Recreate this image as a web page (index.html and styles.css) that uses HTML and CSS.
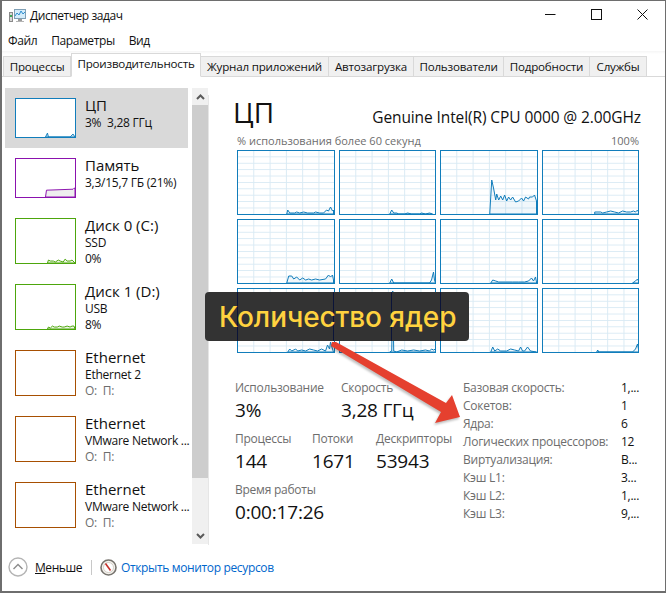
FILE: index.html
```html
<!DOCTYPE html>
<html lang="ru">
<head>
    <meta charset="UTF-8">
    <meta name="viewport" content="width=device-width, initial-scale=1.0">
    <title>Диспетчер задач</title>
    <link rel="stylesheet" href="styles.css">
</head>
<body>
    <div class="window">
        <header class="titlebar">
            <svg class="app-icon" width="17" height="14" viewBox="0 0 17 14">
                <rect x="0.5" y="3.5" width="3" height="9" fill="#d8d8d8" stroke="#8a8a8a"/>
                <rect x="1" y="6" width="2" height="2" fill="#3aa655"/>
                <rect x="5.5" y="0.5" width="11" height="9" fill="#d4ecfa" stroke="#7f9fb5"/>
                <polyline points="6,7 8,4 10,6 12,2 14,5 16,3" fill="none" stroke="#2f8fd0"/>
                <rect x="9" y="10" width="4" height="2" fill="#9a9a9a"/>
                <rect x="7" y="12" width="8" height="1" fill="#b5b5b5"/>
            </svg>
            <span class="title">Диспетчер задач</span>
            <div class="controls">
                <button class="ctl"><svg width="11" height="11" viewBox="0 0 11 11"><path d="M0 5.5H10.5" stroke="#111"/></svg></button>
                <button class="ctl"><svg width="11" height="11" viewBox="0 0 11 11"><rect x="0.5" y="0.5" width="10" height="10" fill="none" stroke="#111"/></svg></button>
                <button class="ctl"><svg width="11" height="11" viewBox="0 0 11 11"><path d="M0.5 0.5L10.5 10.5M10.5 0.5L0.5 10.5" stroke="#111"/></svg></button>
            </div>
        </header>

        <nav class="menu">
            <span>Файл</span>
            <span>Параметры</span>
            <span>Вид</span>
        </nav>

        <div class="tabs">
            <span class="tab tab-proc">Процессы</span>
            <span class="tab tab-perf active">Производительность</span>
            <span class="tab tab-log">Журнал приложений</span>
            <span class="tab tab-start">Автозагрузка</span>
            <span class="tab tab-users">Пользователи</span>
            <span class="tab tab-details">Подробности</span>
            <span class="tab tab-serv">Службы</span>
        </div>

        <div class="content">
            <aside class="sidebar">
                <div class="perf-item short selected">
                    <svg class="thumb cpu" viewBox="0 0 60 39" preserveAspectRatio="none">
                        <polygon class="line-blue" points="30,39 32,35 33,39 55,39 58,36 60,39"/>
                    </svg>
                    <div class="perf-text">
                        <div class="perf-name">ЦП</div>
                        <div class="perf-sub">3%&nbsp; 3,28 ГГц</div>
                    </div>
                </div>
                <div class="perf-item short">
                    <svg class="thumb mem" viewBox="0 0 60 39" preserveAspectRatio="none">
                        <polygon class="line-mem" points="30,39 31,32 58,31 59,30 60,30 60,39"/>
                    </svg>
                    <div class="perf-text">
                        <div class="perf-name">Память</div>
                        <div class="perf-sub">3,3/15,7 ГБ (21%)</div>
                    </div>
                </div>
                <div class="perf-item">
                    <svg class="thumb disk tall" viewBox="0 0 60 45" preserveAspectRatio="none">
                        <polygon class="line-green" points="32,45 33,42 35,43 38,43 40,44 43,42 45,43 48,44 50,41 52,43 55,43 57,42 59,44 60,45"/>
                    </svg>
                    <div class="perf-text">
                        <div class="perf-name">Диск 0 (C:)</div>
                        <div class="perf-sub">SSD</div>
                        <div class="perf-sub">0%</div>
                    </div>
                </div>
                <div class="perf-item">
                    <svg class="thumb disk tall" viewBox="0 0 60 45" preserveAspectRatio="none">
                        <polygon class="line-green" points="32,45 33,43 35,44 37,42 39,43 42,43 44,42 47,43 49,43 52,42 55,43 57,42 59,42 60,45"/>
                    </svg>
                    <div class="perf-text">
                        <div class="perf-name">Диск 1 (D:)</div>
                        <div class="perf-sub">USB</div>
                        <div class="perf-sub">8%</div>
                    </div>
                </div>
                <div class="perf-item">
                    <div class="thumb net tall"></div>
                    <div class="perf-text">
                        <div class="perf-name">Ethernet</div>
                        <div class="perf-sub">Ethernet 2</div>
                        <div class="perf-sub muted">О:&nbsp; П:</div>
                    </div>
                </div>
                <div class="perf-item">
                    <div class="thumb net tall"></div>
                    <div class="perf-text">
                        <div class="perf-name">Ethernet</div>
                        <div class="perf-sub">VMware Network ...</div>
                        <div class="perf-sub muted">О:&nbsp; П:</div>
                    </div>
                </div>
                <div class="perf-item">
                    <div class="thumb net tall"></div>
                    <div class="perf-text">
                        <div class="perf-name">Ethernet</div>
                        <div class="perf-sub">VMware Network ...</div>
                        <div class="perf-sub muted">О:&nbsp; П:</div>
                    </div>
                </div>
            </aside>

            <div class="scrollbar">
                <div class="arrow"><svg width="9" height="6" viewBox="0 0 9 6"><path d="M1 5L4.5 1.5L8 5" fill="none" stroke="#5a5a5a" stroke-width="2"/></svg></div>
                <div class="scroll-thumb"></div>
                <div class="scroll-rest"></div>
                <div class="arrow"><svg width="9" height="6" viewBox="0 0 9 6"><path d="M1 1L4.5 4.5L8 1" fill="none" stroke="#5a5a5a" stroke-width="2"/></svg></div>
            </div>

            <main class="detail">
                <div class="detail-head">
                    <h1>ЦП</h1>
                    <span class="cpu-name">Genuine Intel(R) CPU 0000 @ 2.00GHz</span>
                </div>
                <div class="axis">
                    <span>% использования более 60 секунд</span>
                    <span>100%</span>
                </div>
                <div class="charts">
                    <svg class="chart" viewBox="0 0 96 63" preserveAspectRatio="none"><polygon points="49,63 50,59 52,62 57,62 59,61 62,62 66,61 70,62 76,62 78,61 82,62 86,62 89,59 91,60 93,56 95,60 96,59 96,63"/></svg>
                    <svg class="chart" viewBox="0 0 96 63" preserveAspectRatio="none"><polygon points="50,63 52,59 54,62 57,62 59,63 65,63 68,62 72,63 80,63 82,62 86,63 90,62 93,63"/></svg>
                    <svg class="chart" viewBox="0 0 96 63" preserveAspectRatio="none"><polygon points="49,63 51,29 53,38 55,49 56,43 58,49 60,45 62,49 64,44 66,50 68,46 70,49 72,46 75,51 78,50 81,47 83,50 85,46 88,48 89,46 92,46 94,44 96,50 96,63"/></svg>
                    <svg class="chart" viewBox="0 0 96 63" preserveAspectRatio="none"><polygon points="52,63 52,61 58,61 60,62 64,61 68,60 72,61 76,62 80,60 84,61 88,61 91,60 93,61 95,59 96,61 96,63"/></svg>

                    <svg class="chart" viewBox="0 0 96 63" preserveAspectRatio="none"><polygon points="49,63 51,56 54,56 56,59 59,57 62,60 65,58 68,60 71,59 74,60 78,59 82,60 88,59 91,55 93,57 95,55 96,60 96,63"/></svg>
                    <svg class="chart" viewBox="0 0 96 63" preserveAspectRatio="none"><polygon points="50,63 52,59 54,63 90,63 92,60 94,52 95,60 96,63"/></svg>
                    <svg class="chart" viewBox="0 0 96 63" preserveAspectRatio="none"><polygon points="50,63 52,60 55,61 58,62 65,62 72,62 78,62 84,62 88,61 91,58 93,61 95,57 96,62 96,63"/></svg>
                    <svg class="chart" viewBox="0 0 96 63" preserveAspectRatio="none"><polygon points="90,63 93,61 95,59 96,61 96,63"/></svg>

                    <svg class="chart" viewBox="0 0 96 63" preserveAspectRatio="none"><polygon points="50,63 52,60 54,62 58,60 60,62 64,61 68,62 72,60 76,61 80,62 84,60 88,62 90,56 92,60 93,53 95,60 96,63"/></svg>
                    <svg class="chart" viewBox="0 0 96 63" preserveAspectRatio="none"><polygon points="50,63 52,62 53,2 54,62 57,63 62,61 68,62 74,61 80,62 86,61 90,62 92,60 94,61 96,60 96,63"/></svg>
                    <svg class="chart" viewBox="0 0 96 63" preserveAspectRatio="none"><polygon points="50,63 52,58 54,62 57,60 60,62 66,62 70,60 74,61 78,62 80,58 82,62 84,62 87,58 90,62 96,63"/></svg>
                    <svg class="chart" viewBox="0 0 96 63" preserveAspectRatio="none"><polygon points="54,63 55,61 56,63 90,63 93,60 95,55 96,60 96,63"/></svg>
                </div>

                <div class="stats">
                    <div class="stats-left">
                        <div class="stat-row">
                            <div class="stat stat-usage"><div class="stat-label">Использование</div><div class="stat-value">3%</div></div>
                            <div class="stat"><div class="stat-label">Скорость</div><div class="stat-value">3,28 ГГц</div></div>
                        </div>
                        <div class="stat-row">
                            <div class="stat stat-proc"><div class="stat-label">Процессы</div><div class="stat-value">144</div></div>
                            <div class="stat stat-threads"><div class="stat-label">Потоки</div><div class="stat-value">1671</div></div>
                            <div class="stat"><div class="stat-label">Дескрипторы</div><div class="stat-value">53943</div></div>
                        </div>
                        <div class="stat-row">
                            <div class="stat"><div class="stat-label">Время работы</div><div class="stat-value">0:00:17:26</div></div>
                        </div>
                    </div>
                    <dl class="specs">
                        <dt>Базовая скорость:</dt><dd>1,...</dd>
                        <dt>Сокетов:</dt><dd>1</dd>
                        <dt>Ядра:</dt><dd>6</dd>
                        <dt>Логических процессоров:</dt><dd>12</dd>
                        <dt>Виртуализация:</dt><dd>В...</dd>
                        <dt>Кэш L1:</dt><dd>3...</dd>
                        <dt>Кэш L2:</dt><dd>1,...</dd>
                        <dt>Кэш L3:</dt><dd>9,...</dd>
                    </dl>
                </div>
            </main>
        </div>

        <footer class="footer">
            <svg class="less-icon" width="20" height="20" viewBox="0 0 20 20">
                <circle cx="10" cy="10" r="9" fill="none" stroke="#b4b4b4" stroke-width="1.4"/>
                <path d="M5.5 12L10 7.5L14.5 12" fill="none" stroke="#8c8c8c" stroke-width="1.4"/>
            </svg>
            <span class="less"><u>М</u>еньше</span>
            <span class="divider"></span>
            <svg class="monitor-icon" width="17" height="17" viewBox="0 0 17 17">
                <circle cx="8.5" cy="8.5" r="7.5" fill="#f4f1ec" stroke="#77746e" stroke-width="1.6"/>
                <circle cx="8.5" cy="8.5" r="5" fill="#fff" stroke="#c9c4bb" stroke-width="0.8"/>
                <path d="M5.5 4.5L10.5 11.5" stroke="#c8312b" stroke-width="1.6"/>
            </svg>
            <a class="open-link">Открыть монитор ресурсов</a>
        </footer>

        <div class="callout">
            <i class="seam seam-a"></i>
            <i class="seam seam-b"></i>
            <i class="seam seam-c"></i>
            <i class="seam seam-d"></i>
            <span class="callout-text">Количество ядер</span>
        </div>
        <svg class="pointer" width="666" height="593" viewBox="0 0 666 593">
            <polygon points="332,342 336,342 446,403 452,395 460,417 435,423 441,412 331,346" fill="#e5402f"/>
        </svg>
    </div>
</body>
</html>
```

FILE: styles.css
```css
* {
    box-sizing: border-box;
}

body {
    margin: 0;
    background: #fff;
    font-family: "Open Sans", "Noto Sans", sans-serif;
    font-size: 12px;
    color: #111;
}

.window {
    position: relative;
    width: 666px;
    height: 593px;
    overflow: hidden;
    display: flex;
    flex-direction: column;
    border-style: solid;
    border-color: #6e6e6e;
    border-width: 1px 1px 2px 2px;
}

/* title bar */
.titlebar {
    display: flex;
    align-items: center;
    height: 30px;
    padding-left: 7px;
}

.app-icon {
    margin-right: 4px;
}

.title {
    letter-spacing: -0.45px;
}

.controls {
    display: flex;
    margin-left: auto;
    align-self: stretch;
}

.ctl {
    width: 46px;
    padding: 0 0 2px;
    border: none;
    background: none;
    display: flex;
    align-items: center;
    justify-content: center;
}

/* menu */
.menu {
    display: flex;
    gap: 14px;
    height: 22px;
    padding-left: 6px;
    align-items: center;
    letter-spacing: -0.4px;
}

.menu span {
    line-height: 20px;
}

/* tabs */
.tabs {
    display: flex;
    height: 26px;
    padding: 2px 0 0 1px;
    background: linear-gradient(#f5f5f5 0, #fff 3px);
    border-bottom: 1px solid #d9d9d9;
    align-items: flex-end;
}

.tab {
    height: 21px;
    margin-bottom: -1px;
    border: 1px solid #d9d9d9;
    border-left-width: 0;
    background: #f0f0f0;
    text-align: center;
    font-size: 11.6px;
    line-height: 19px;
    letter-spacing: -0.2px;
    white-space: nowrap;
}

.tab-proc { width: 68px; border-left-width: 1px; }
.tab-log { width: 128px; }
.tab-start { width: 85px; }
.tab-users { width: 90px; }
.tab-details { width: 86px; }
.tab-serv { width: 57px; }

.tab.active {
    width: 130px;
    height: 24px;
    position: relative;
    background: #fff;
    border-left-width: 1px;
    border-bottom-color: #fff;
    line-height: 20px;
}

/* body of the performance tab */
.content {
    display: flex;
    height: 469px;
    padding: 11px 0 0 3px;
}

.sidebar {
    width: 183px;
    flex: none;
}

.perf-item {
    display: flex;
    gap: 9px;
    height: 66px;
    padding: 10px 0 0 10px;
}

.perf-item.short {
    height: 60px;
}

.perf-item.selected {
    background: #d9d9d9;
}

.perf-text {
    margin-top: -3px;
}

.thumb {
    display: block;
    flex: none;
    width: 61px;
    height: 40px;
    border: 1px solid;
    background: #fff;
}

.thumb.tall {
    height: 46px;
}

.thumb.cpu { border-color: #117dbb; }
.thumb.mem { border-color: #8b12ae; }
.thumb.disk { border-color: #4da60c; }
.thumb.net { border-color: #a74f01; }

.line-blue { fill: #d9eaf4; stroke: #117dbb; stroke-width: 1; }
.line-mem { fill: #eee; stroke: #8b12ae; stroke-width: 1; }
.line-green { fill: #eff7e7; stroke: #4da60c; stroke-width: 1; }

.perf-name {
    font-size: 15px;
    line-height: 20px;
}

.perf-sub {
    font-size: 12px;
    line-height: 15.5px;
    letter-spacing: -0.25px;
    white-space: nowrap;
}

.muted {
    color: #6d6d6d;
}

.scrollbar {
    width: 16px;
    height: 456px;
    margin-left: 4px;
    flex: none;
    display: flex;
    flex-direction: column;
    background: #f0f0f0;
}

.arrow {
    height: 17px;
    display: flex;
    align-items: center;
    justify-content: center;
}

.scroll-thumb {
    height: 373px;
    background: #cdcdcd;
}

.scroll-rest {
    flex: 1;
}

/* right pane */
.detail {
    flex: 1;
    padding-left: 28px;
    border-left: 1px solid #e6e6e6;
    margin-top: 7px;
    height: 450px;
}

.detail-head {
    display: flex;
    align-items: flex-end;
    justify-content: space-between;
    width: 409px;
    height: 34px;
    margin-top: 2px;
    padding-right: 1px;
    margin-left: -4px;
}

h1 {
    margin: 0;
    font-size: 28px;
    font-weight: 400;
    line-height: 38px;
}

.cpu-name {
    font-size: 15.5px;
    line-height: 20px;
    letter-spacing: -0.1px;
    margin-bottom: 4px;
}

.axis {
    display: flex;
    justify-content: space-between;
    width: 402px;
    margin-top: 2px;
    height: 17px;
    font-size: 11px;
    line-height: 16px;
    color: #6d6d6d;
}

.charts {
    display: grid;
    grid-template-columns: repeat(4, 1fr);
    grid-auto-rows: 65px;
    gap: 4px;
    width: 402px;
}

.chart {
    width: 100%;
    height: 65px;
    display: block;
    border: 1px solid #117dbb;
    background-image:
        linear-gradient(90deg, #d9eaf4 1px, transparent 1px),
        linear-gradient(#d9eaf4 1px, transparent 1px);
    background-size: 16.3px 6.4px;
    background-position: -1px -1px;
}

.chart polygon {
    fill: rgba(17, 125, 187, 0.06);
    stroke: #117dbb;
    stroke-width: 1;
    vector-effect: non-scaling-stroke;
}

/* numbers under the charts */
.stats {
    display: flex;
    margin-top: 27px;
    margin-left: -2px;
}

.stats-left {
    width: 228px;
    flex: none;
}

.stat-row {
    display: flex;
    height: 51px;
}

.stat-usage { width: 106px; }
.stat-proc { width: 77px; }
.stat-threads { width: 64px; }

.stat-label {
    font-size: 12px;
    line-height: 16px;
    color: #6d6d6d;
    letter-spacing: -0.25px;
}

.stat-value {
    font-size: 19px;
    line-height: 26px;
    margin-top: 1px;
    letter-spacing: -0.2px;
    white-space: nowrap;
}

.specs {
    margin: 0;
    display: grid;
    grid-template-columns: 158px auto;
    grid-auto-rows: 18px;
    line-height: 16px;
    letter-spacing: -0.25px;
}

.specs dt {
    color: #6d6d6d;
    white-space: nowrap;
}

.specs dd {
    margin: 0;
}

/* footer */
.footer {
    display: flex;
    align-items: center;
    height: 47px;
    padding-left: 6px;
    padding-bottom: 2px;
}

.less {
    margin-left: 7px;
    letter-spacing: -0.45px;
}

.divider {
    width: 1px;
    height: 15px;
    margin: 0 8px 0 9px;
    background: #c8c8c8;
}

.monitor-icon {
    margin-right: 4px;
}

.open-link {
    color: #0066cc;
    letter-spacing: -0.35px;
    font-size: 12px;
}

/* caption laid over the charts */
.callout {
    position: absolute;
    left: 203px;
    top: 291px;
    width: 264px;
    height: 49px;
    background: #333;
    border-radius: 4px;
    display: flex;
    align-items: center;
    padding-left: 14px;
    overflow: hidden;
}

.callout-text {
    position: relative;
    color: #ffd23f;
    font-family: Inter, "Open Sans", sans-serif;
    font-size: 28px;
    font-weight: 500;
    line-height: 34px;
    letter-spacing: -0.1px;
    white-space: nowrap;
}

.seam {
    position: absolute;
    top: 0;
    bottom: 0;
    width: 1px;
    background: #0b1438;
}

.seam-a { left: 32px; }
.seam-b { left: 128px; }
.seam-c { left: 186px; }
.seam-d { left: 235px; }

.pointer {
    position: absolute;
    left: -2px;
    top: -1px;
    pointer-events: none;
    filter: drop-shadow(-1px 2px 1px rgba(0, 0, 0, 0.25));
}
```
